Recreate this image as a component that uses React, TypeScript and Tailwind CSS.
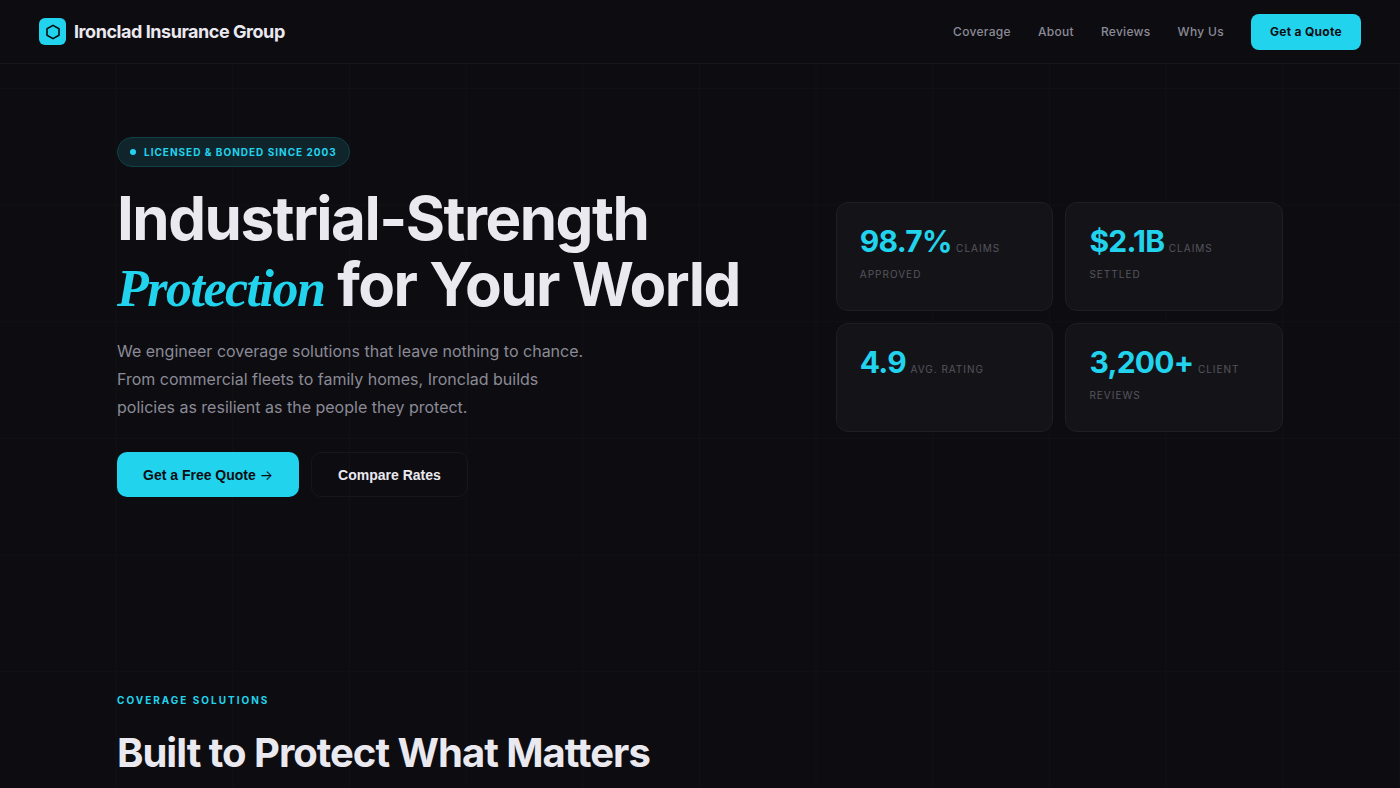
const navLinks = [
    { label: 'Coverage', href: '#coverage' },
    { label: 'About', href: '#about' },
    { label: 'Reviews', href: '#reviews' },
    { label: 'Why Us', href: '#why-us' },
];

const stats = [
    { value: '98.7%', label: 'Claims Approved' },
    { value: '$2.1B', label: 'Claims Settled' },
    { value: '4.9', label: 'Avg. Rating' },
    { value: '3,200+', label: 'Client Reviews' },
];

function Logo() {
    return (
        <a href="#" className="flex items-center gap-2">
            <span className="flex h-[27px] w-[27px] items-center justify-center rounded-md bg-[#22d3ee]">
                <svg viewBox="0 0 16 16" className="h-4 w-4" fill="none" stroke="#0d0d11" strokeWidth="1.6" strokeLinejoin="round" aria-hidden="true">
                    <path d="M8 1.4 14 4.8v6.4L8 14.6 2 11.2V4.8Z" />
                </svg>
            </span>
            <span className="text-lg font-bold leading-6 tracking-tight">Ironclad Insurance Group</span>
        </a>
    );
}

function Navbar() {
    return (
        <header className="flex h-16 items-center justify-between border-b border-[#17171b] bg-[#0d0d11] px-[39px]">
            <Logo />
            <nav className="flex items-center gap-[27px] text-xs font-medium tracking-wide text-[#8b8a96]">
                {navLinks.map((link) => (
                    <a key={link.href} href={link.href} className="hover:text-white">
                        {link.label}
                    </a>
                ))}
                <a href="#quote" className="flex h-9 items-center rounded-lg bg-[#22d3ee] px-[19px] font-bold text-[#0d0d11]">
                    Get a Quote
                </a>
            </nav>
        </header>
    );
}

function Hero() {
    return (
        <section className="mx-auto grid max-w-[1166px] grid-cols-[3fr_2fr] items-center gap-12 pt-[73px]">
            <div>
                <p className="mb-[18px] flex h-[30px] w-fit items-center gap-2 rounded-full border border-[#124149] bg-[#0f252b] px-3 text-[10px] font-bold uppercase tracking-widest text-[#22d3ee]">
                    <span className="h-1.5 w-1.5 rounded-full bg-[#22d3ee]" />
                    Licensed &amp; Bonded Since 2003
                </p>
                <h1 className="mb-5 text-[60px] font-bold leading-[66px] tracking-tight">
                    Industrial-Strength
                    <br />
                    <em className="font-['Liberation_Serif',serif] text-[52px] leading-none italic text-[#22d3ee]">Protection</em> for Your World
                </h1>
                <p className="mb-[31px] max-w-[470px] text-base leading-7 text-[#8b8a96]">
                    We engineer coverage solutions that leave nothing to chance. From commercial fleets to family homes, Ironclad builds
                    policies as resilient as the people they protect.
                </p>
                <div className="flex gap-3 font-['Liberation_Sans',sans-serif] text-sm font-bold">
                    <button type="button" className="h-[45px] rounded-[10px] bg-[#22d3ee] px-[26px] text-[#0d0d11]">
                        Get a Free Quote <span className="font-['Inter',sans-serif] font-normal">→</span>
                    </button>
                    <button type="button" className="h-[45px] rounded-[10px] border border-[#17171b] px-[26px]">
                        Compare Rates
                    </button>
                </div>
            </div>

            <div className="grid grid-cols-2 gap-3">
                {stats.map((stat) => (
                    <p key={stat.label} className="min-h-[109px] rounded-xl border border-[#1e1e23] bg-[#141418] px-[23px] pt-[22px] leading-6">
                        <span className="text-[30px] font-bold leading-[33px] tracking-tight text-[#22d3ee]">{stat.value}</span>{' '}
                        <span className="text-[10px] uppercase tracking-widest text-[#55545e]">{stat.label}</span>
                    </p>
                ))}
            </div>
        </section>
    );
}

function Coverage() {
    return (
        <section id="coverage" className="mx-auto max-w-[1166px] pt-[194px]">
            <p className="mb-[21px] text-[10px] font-bold uppercase leading-[18px] tracking-[2px] text-[#22d3ee]">Coverage Solutions</p>
            <h2 className="text-[40px] font-bold leading-[46px] tracking-tight">Built to Protect What Matters</h2>
        </section>
    );
}

export default function App() {
    return (
        <div className="h-screen overflow-hidden bg-[#0d0d11] font-['Inter',sans-serif] text-[#ebe9f0]">
            <Navbar />
            {/* faint square grid behind the content */}
            <main className="min-h-full bg-[linear-gradient(to_right,#111115_1px,transparent_1px),linear-gradient(to_bottom,#111115_1px,transparent_1px)] bg-[size:calc(100vw/12)_calc(100vw/12)] bg-[position:-1px_24px]">
                <Hero />
                <Coverage />
            </main>
        </div>
    );
}
